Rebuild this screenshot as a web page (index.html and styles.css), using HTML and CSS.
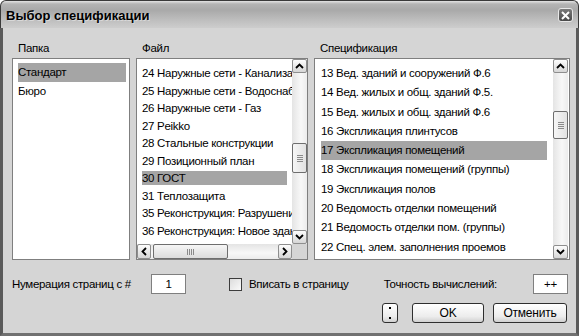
FILE: index.html
```html
<!DOCTYPE html>
<html lang="ru">
<head>
    <meta charset="UTF-8">
    <title>Выбор спецификации</title>
    <link rel="stylesheet" href="styles.css">
</head>
<body>
<div class="window">
    <!-- Title bar -->
    <div class="titlebar">
        <span class="title">Выбор спецификации</span>
        <span class="close">
            <svg width="9" height="9" viewBox="0 0 9 9"><path d="M1 1 L8 8 M8 1 L1 8" stroke="#fff" stroke-width="2"/></svg>
        </span>
    </div>

    <div class="frame">
        <!-- Three lists -->
        <div class="lists">
            <div class="col">
                <div class="caption">Папка</div>
                <div class="listbox folder">
                    <div class="items">
                        <div class="item sel">Стандарт</div>
                        <div class="item">Бюро</div>
                    </div>
                </div>
            </div>

            <div class="col">
                <div class="caption">Файл</div>
                <div class="listbox files">
                    <div class="items">
                        <div class="item"><span>24 Наружные сети - Канализация</span></div>
                        <div class="item"><span>25 Наружные сети - Водоснабжение</span></div>
                        <div class="item"><span>26 Наружные сети - Газ</span></div>
                        <div class="item"><span>27 Peikko</span></div>
                        <div class="item"><span>28 Стальные конструкции</span></div>
                        <div class="item"><span>29 Позиционный план</span></div>
                        <div class="item sel"><span>30 ГОСТ</span></div>
                        <div class="item"><span>31 Теплозащита</span></div>
                        <div class="item"><span>35 Реконструкция: Разрушение</span></div>
                        <div class="item"><span>36 Реконструкция: Новое здание</span></div>
                    </div>
                    <div class="vscroll">
                        <div class="sbtn"><svg width="9" height="6" viewBox="0 0 9 6"><path d="M1 5 L4.5 1.5 L8 5" fill="none" stroke="#000" stroke-width="1.8"/></svg></div>
                        <div class="track"><div class="thumb files-thumb"><i></i><i></i><i></i><i></i></div></div>
                        <div class="sbtn"><svg width="9" height="6" viewBox="0 0 9 6"><path d="M1 1 L4.5 4.5 L8 1" fill="none" stroke="#000" stroke-width="1.8"/></svg></div>
                    </div>
                    <div class="hscroll">
                        <div class="sbtn"><svg width="6" height="9" viewBox="0 0 6 9"><path d="M5 1 L1.5 4.5 L5 8" fill="none" stroke="#000" stroke-width="1.8"/></svg></div>
                        <div class="htrack"><div class="hthumb"><i></i><i></i><i></i><i></i></div></div>
                        <div class="sbtn"><svg width="6" height="9" viewBox="0 0 6 9"><path d="M1 1 L4.5 4.5 L1 8" fill="none" stroke="#000" stroke-width="1.8"/></svg></div>
                    </div>
                    <div class="corner"></div>
                </div>
            </div>

            <div class="col">
                <div class="caption">Спецификация</div>
                <div class="listbox specs">
                    <div class="items">
                        <div class="item">13 Вед. зданий и сооружений Ф.6</div>
                        <div class="item">14 Вед. жилых и общ. зданий Ф.5.</div>
                        <div class="item">15 Вед. жилых и общ. зданий Ф.6</div>
                        <div class="item">16 Экспликация плинтусов</div>
                        <div class="item sel">17 Экспликация помещений</div>
                        <div class="item">18 Экспликация помещений (группы)</div>
                        <div class="item">19 Экспликация полов</div>
                        <div class="item">20 Ведомость отделки помещений</div>
                        <div class="item">21 Ведомость отделки пом. (группы)</div>
                        <div class="item">22 Спец. элем. заполнения проемов</div>
                    </div>
                    <div class="vscroll">
                        <div class="sbtn"><svg width="9" height="6" viewBox="0 0 9 6"><path d="M1 5 L4.5 1.5 L8 5" fill="none" stroke="#000" stroke-width="1.8"/></svg></div>
                        <div class="track"><div class="thumb specs-thumb"><i></i><i></i><i></i><i></i></div></div>
                        <div class="sbtn"><svg width="9" height="6" viewBox="0 0 9 6"><path d="M1 1 L4.5 4.5 L8 1" fill="none" stroke="#000" stroke-width="1.8"/></svg></div>
                    </div>
                </div>
            </div>
        </div>

        <!-- Options -->
        <div class="options">
            <span class="opt-label">Нумерация страниц с #</span>
            <span class="field">1</span>
            <span class="checkbox"></span>
            <span class="check-label">Вписать в страницу</span>
            <span class="prec-label">Точность вычислений:</span>
            <span class="field">++</span>
        </div>

        <!-- Buttons -->
        <div class="buttons">
            <button class="btn btn-more"><svg width="4" height="14" viewBox="0 0 4 14"><rect x="1" y="1" width="2" height="2" fill="#000"/><rect x="1" y="11" width="2" height="2" fill="#000"/></svg></button>
            <button class="btn btn-ok">OK</button>
            <button class="btn btn-cancel">Отменить</button>
        </div>
    </div>
</div>
</body>
</html>
```

FILE: styles.css
```css
body {
    margin: 0;
    background: #fff;
    font-family: "Liberation Sans", Arial, sans-serif;
    font-size: 11.5px;
    letter-spacing: -0.3px;
    color: #000;
}
.window {
    width: 579px;
    height: 336px;
    display: flex;
    flex-direction: column;
}
.titlebar {
    height: 28px;
    box-sizing: border-box;
    border: 1px solid #3a3a3a;
    border-bottom: none;
    border-radius: 6px 6px 0 0;
    background: linear-gradient(to bottom, #e4e4e4 0, #b4b4b4 3px, #a9a9a9 9px, #c0c0c0 20px, #cdcdcd 27px);
    display: flex;
    align-items: center;
    justify-content: space-between;
    padding: 0 5px 0 5px;
}
.title {
    font-weight: bold;
    font-size: 13px;
    letter-spacing: 0;
    color: #000;
    text-shadow: 1px 1px 0 #d8d8d8;
    margin-top: 1px;
}
.close {
    width: 15px;
    height: 14px;
    margin-top: 1px;
    box-sizing: border-box;
    border: 1px solid #e8e8e8;
    border-radius: 3px;
    background: linear-gradient(to bottom, #7a7a7a, #4a4a4a);
    display: flex;
    align-items: center;
    justify-content: center;
}
.frame {
    flex: 1;
    background: #d5d5d5;
    border: 3px solid #707070;
    border-top: none;
    border-left-color: #5a5a5a;
    border-right-color: #5a5a5a;
    padding: 13px 6px 0 9px;
    display: flex;
    flex-direction: column;
}
.lists {
    display: grid;
    grid-template-columns: 118px 172px 256px;
    column-gap: 6px;
}
.caption {
    height: 14px;
    line-height: 14px;
    padding-left: 6px;
    margin-bottom: 3px;
}
.listbox {
    height: 202px;
    box-sizing: border-box;
    border: 1px solid #7f7f7f;
    background: #fff;
    overflow: hidden;
}
.items {
    white-space: nowrap;
    overflow: hidden;
}
.item.sel {
    background: #a5a5a5;
}

/* folder list */
.folder .items {
    padding: 4px 3px 0 5px;
}
.folder .item {
    height: 19px;
    line-height: 19px;
}

/* file list */
.files {
    display: grid;
    grid-template-columns: 155px 15px;
    grid-template-rows: 185px 15px;
}
.files .items {
    padding: 7px 5px 0 5px;
}
.files .item {
    height: 14px;
    line-height: 14px;
    margin-bottom: 3.5px;
}

/* spec list */
.specs {
    display: grid;
    grid-template-columns: 238px 16px;
}
.specs .items {
    padding: 5px 6px 0 6px;
}
.specs .item {
    height: 19.3px;
    line-height: 19.3px;
}

/* scrollbars */
.vscroll {
    display: flex;
    flex-direction: column;
    background: linear-gradient(to right, #e4e4e4, #f8f8f8 60%, #ececec);
}
.specs .vscroll {
    margin-right: 1px;
}
.sbtn {
    height: 14px;
    box-sizing: border-box;
    border: 1px solid #8e8e8e;
    border-radius: 2px;
    background: linear-gradient(to bottom, #fdfdfd, #d6d6d6);
    display: flex;
    align-items: center;
    justify-content: center;
}
.track {
    flex: 1;
}
.thumb {
    height: 30px;
    box-sizing: border-box;
    border: 1px solid #6e6e6e;
    border-radius: 2px;
    background: linear-gradient(to right, #f6f6f6, #e2e2e2);
    display: flex;
    flex-direction: column;
    align-items: center;
    justify-content: center;
    gap: 1px;
}
.thumb i {
    display: block;
    width: 6px;
    height: 1px;
    background: #8a8a8a;
}
.files-thumb {
    margin-top: 70px;
}
.specs-thumb {
    margin-top: 38px;
    height: 28px;
}
.hscroll {
    display: flex;
    background: linear-gradient(to bottom, #e4e4e4, #f8f8f8 60%, #ececec);
}
.hscroll .sbtn {
    width: 14px;
    height: 15px;
}
.htrack {
    flex: 1;
    padding-left: 2px;
}
.hthumb {
    width: 75px;
    height: 15px;
    box-sizing: border-box;
    border: 1px solid #6e6e6e;
    border-radius: 2px;
    background: linear-gradient(to bottom, #f6f6f6, #dcdcdc);
    display: flex;
    align-items: center;
    justify-content: center;
    gap: 1px;
}
.hthumb i {
    display: block;
    width: 1px;
    height: 6px;
    background: #8a8a8a;
}
.corner {
    background: #d5d5d5;
}

/* options row */
.options {
    display: flex;
    align-items: center;
    margin-top: 14px;
    height: 20px;
    margin-right: 2px;
}
.opt-label {
    width: 139px;
}
.field {
    width: 35px;
    height: 20px;
    box-sizing: border-box;
    border: 1px solid #7f7f7f;
    background: #fff;
    text-align: center;
    line-height: 18px;
}
.checkbox {
    width: 13px;
    height: 13px;
    box-sizing: border-box;
    border: 1px solid #3c3c3c;
    background: linear-gradient(135deg, #dcdcdc, #fafafa);
    margin-left: 43px;
}
.check-label {
    margin-left: 7px;
}
.prec-label {
    margin-left: auto;
    margin-right: 36px;
}

/* buttons */
.buttons {
    display: flex;
    justify-content: flex-end;
    margin-top: 9px;
    margin-right: 3px;
}
.btn {
    height: 20px;
    box-sizing: border-box;
    border: 1px solid #2e2e2e;
    border-radius: 3px;
    background: linear-gradient(to bottom, #ffffff, #ececec 70%, #d0d0d0);
    font-family: inherit;
    font-size: 12px;
    letter-spacing: -0.2px;
    color: #000;
    padding: 0;
    display: flex;
    align-items: center;
    justify-content: center;
}
.btn-more {
    width: 16px;
}
.btn-ok {
    width: 72px;
    margin-left: 14px;
}
.btn-cancel {
    width: 74px;
    margin-left: 9px;
}
```
